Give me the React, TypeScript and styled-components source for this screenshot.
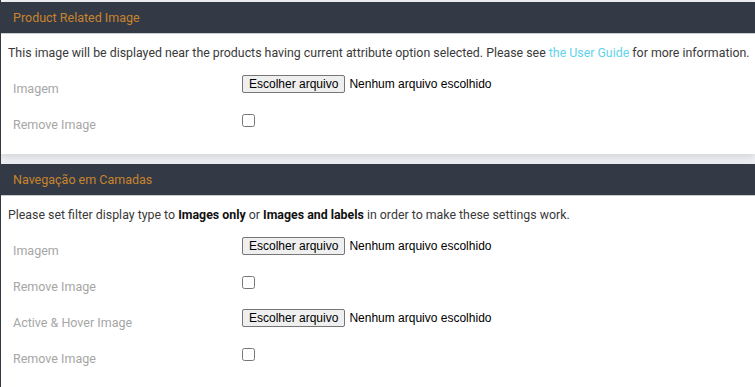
import React from 'react';
import styled, { createGlobalStyle } from 'styled-components';

const GlobalStyle = createGlobalStyle`
    html, body {
        margin: 0;
        padding: 0;
        background: #333a46;
    }
    body {
        font-family: Roboto, "Liberation Sans", sans-serif;
        font-size: 12.5px;
    }
`;

const Page = styled.div`
    margin-left: 1px;
    padding-top: 2px;
    background: #eff1f4;
    overflow: hidden;
`;

const Panel = styled.section`
    background: #fff;
    box-shadow: 0 3px 8px rgba(0, 0, 0, 0.12);
    margin-bottom: 10px;
    margin-left: -1px;
    padding-left: 1px;

    &:last-child {
        margin-bottom: 0;
    }
`;

const Header = styled.div`
    height: 31px;
    display: flex;
    align-items: center;
    padding: 0 12px;
    background: #333a46;
    border-bottom: 1px solid #c9cbcf;
    color: #c8842c;
`;

const Body = styled.div`
    padding: 10px 0 10px 7px;
    border-left: 1px solid #333a46;
    margin-left: -1px;
`;

const Note = styled.p`
    margin: 0 0 10px;
    line-height: 18px;
    font-size: 12.36px;
    color: #3a3a3a;
    white-space: nowrap;

    b {
        color: #111;
        font-weight: 700;
    }
`;

const Link = styled.a`
    color: #5fd3ea;
    text-decoration: none;
`;

const Row = styled.div`
    display: grid;
    grid-template-columns: 234px 1fr;
    height: 36px;
`;

const Label = styled.div`
    padding: 8px 0 0 5px;
    line-height: 18px;
    color: #a6a6a6;
`;

const Control = styled.div<{ $top: number }>`
    display: flex;
    align-items: center;
    padding-top: ${(p) => p.$top}px;
    height: 18px;
`;

const FileButton = styled.button`
    height: 18px;
    padding: 0 6px;
    background: #efefef;
    border: 1px solid #767676;
    border-radius: 2px;
    font-family: "Liberation Sans", Arial, sans-serif;
    font-size: 12px;
    color: #000;
`;

const FileName = styled.span`
    margin-left: 4px;
    font-family: "Liberation Sans", Arial, sans-serif;
    font-size: 12px;
    color: #000;
`;

const Check = styled.input`
    margin: 0;
    width: 13px;
    height: 13px;
`;

const FileRow = ({ label }: { label: string }) => (
    <Row>
        <Label>{label}</Label>
        <Control $top={3}>
            <FileButton type="button">Escolher arquivo</FileButton>
            <FileName>Nenhum arquivo escolhido</FileName>
        </Control>
    </Row>
);

const CheckRow = ({ label }: { label: string }) => (
    <Row>
        <Label>{label}</Label>
        <Control $top={3}>
            <Check type="checkbox" />
        </Control>
    </Row>
);

export default function App() {
    return (
        <>
            <GlobalStyle />
            <Page>
                <Panel>
                    <Header>Product Related Image</Header>
                    <Body>
                        <Note>
                            This image will be displayed near the products having current attribute option
                            selected. Please see <Link href="#">the User Guide</Link> for more information.
                        </Note>
                        <FileRow label="Imagem" />
                        <CheckRow label="Remove Image" />
                    </Body>
                </Panel>
                <Panel>
                    <Header>Navegação em Camadas</Header>
                    <Body>
                        <Note>
                            Please set filter display type to <b>Images only</b> or <b>Images and labels</b> in
                            order to make these settings work.
                        </Note>
                        <FileRow label="Imagem" />
                        <CheckRow label="Remove Image" />
                        <FileRow label="Active &amp; Hover Image" />
                        <CheckRow label="Remove Image" />
                    </Body>
                </Panel>
            </Page>
        </>
    );
}
